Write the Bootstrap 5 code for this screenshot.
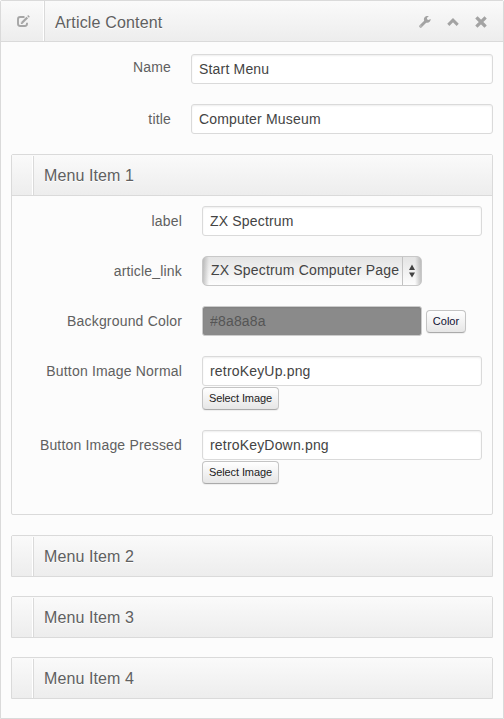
<!DOCTYPE html>
<html lang="en">
<head>
<meta charset="utf-8">
<title>Article Content</title>
<link href="https://cdn.jsdelivr.net/npm/bootstrap@5.3.0/dist/css/bootstrap.min.css" rel="stylesheet">
<style>
body{font-family:"Liberation Sans",Arial,sans-serif;font-size:14px;line-height:20px;color:#555;background:#fcfcfc}
.panel{height:719px;border:1px solid #dadada;border-radius:2px 2px 0 0;background:#fcfcfc}
.bar{height:41px;background:linear-gradient(#fafafa,#ededed);border-bottom:1px solid #dadada}
.bar h2{font-size:16px;line-height:20px;font-weight:400;color:#606060;text-shadow:0 1px 0 #fff;margin:3px 0 0 10px;letter-spacing:.17px}
.item .bar h2{margin-top:1px;letter-spacing:.1px}
.grip{height:39px;width:22px;border-right:1px solid #dadada;box-shadow:inset -1px 0 0 #fff}
.grip-main{width:44px;height:40px}
.tools{gap:16px;margin:2px 16px 0 0}
.outer-body{padding:12px 10px 0}
.field{margin-bottom:20px}
.field>label{text-align:right;padding-top:5px;flex:none;letter-spacing:.18px;color:#606060}
.outer-field>label{width:160px;margin-right:20px}
.first-label{margin-top:-2px}
.inner-field>label{width:161px;margin-right:20px}
.form-control.text{height:30px;font-size:14px;line-height:20px;padding:4px 7px;border:1px solid #dadada;border-radius:3px;color:#444;box-shadow:inset 0 1px 2px rgba(0,0,0,.07);letter-spacing:.18px;background:#fff}
.form-control.swatch{width:220px;background:#8a8a8a;color:#555;border-color:#ccc}
.picker{width:220px;height:30px;border:1px solid #c8c8c8;border-radius:5px;background:linear-gradient(to right,rgba(150,150,150,.55),rgba(200,200,200,0) 6px,rgba(200,200,200,0) calc(100% - 6px),rgba(150,150,150,.55)),linear-gradient(#e4e4e4,#fdfdfd);color:#444}
.picker span{width:200px;height:28px;flex:none;padding:3px 0 0 8px;border-right:1px solid #c2c2c2;white-space:nowrap;letter-spacing:.18px}
.picker svg{margin-left:5px}
.btn.tiny{height:23px;font-size:11px;line-height:13px;padding:4px 6px;border:1px solid #c4c4c4;border-bottom-color:#aaa;border-radius:4px;background:linear-gradient(#fff,#e6e6e6);color:#222;box-shadow:0 1px 1px rgba(0,0,0,.06)}
.btn.pick{width:77px;margin-top:1px;padding:4px 0;letter-spacing:-.1px}
.btn.color{width:40px;margin-left:4px;color:#113;padding:4px 0}
.item{border:1px solid #dadada;border-radius:2px 2px 0 0;margin-bottom:19px}
.item-open{height:361px;margin-bottom:20px;border-radius:2px}
.item-shut .bar{height:40px;border-bottom:0}
.item-body{padding:10px 10px 0 9px}
</style>
<script src="https://cdn.jsdelivr.net/npm/bootstrap@5.3.0/dist/js/bootstrap.bundle.min.js"></script>
</head>
<body>
<main class="panel">
  <header class="bar d-flex align-items-center">
    <div class="grip grip-main d-flex align-items-center justify-content-center">
      <svg width="14" height="13" viewBox="0 0 14 13" fill="none" stroke="#a6a6a6" stroke-width="1.900"><path d="M8.500 2H4.200Q2 2 2 4.200v4.600Q2 11 4.200 11h4.600Q11 11 11 8.800V7.800"/><path d="M6 7.800 11.300 2.500" stroke-width="2.300"/><path d="M12 1.900 13 .9" stroke-width="2.300"/><path d="M4.900 6.700v2.300h2.300z" fill="#a6a6a6" stroke="none"/></svg>
    </div>
    <h2>Article Content</h2>
    <div class="tools d-flex align-items-center ms-auto">
      <svg width="12" height="12" viewBox="0 0 12 12"><path d="M1.700 10.300 7.200 4.800" stroke="#a3a3a3" stroke-width="2.900" stroke-linecap="round"/><path d="M11.700 3.100A3.400 3.400 0 1 1 9.900.3L8 1.700v1.500l1.300.8z" fill="#a3a3a3"/><circle cx="1.900" cy="10.100" r=".5" fill="#eee"/></svg>
      <svg width="12" height="12" viewBox="0 0 12 12"><path d="M1.300 8.900 6 4.200l4.700 4.700" fill="none" stroke="#a3a3a3" stroke-width="3"/></svg>
      <svg width="12" height="12" viewBox="0 0 12 12"><path d="m2.500 2.500 7 7m0-7-7 7" stroke="#a3a3a3" stroke-width="3.200" stroke-linecap="square"/></svg>
    </div>
  </header>
  <div class="outer-body">
    <div class="field outer-field d-flex"><label class="first-label" for="name">Name</label><input id="name" class="form-control text" value="Start Menu"></div>
    <div class="field outer-field d-flex"><label for="title">title</label><input id="title" class="form-control text" value="Computer Museum"></div>
    <section class="item item-open">
      <div class="bar d-flex align-items-center"><div class="grip"></div><h2>Menu Item 1</h2></div>
      <div class="item-body">
        <div class="field inner-field d-flex"><label for="lab">label</label><input id="lab" class="form-control text" value="ZX Spectrum"></div>
        <div class="field inner-field d-flex"><label>article_link</label>
          <div class="picker d-flex align-items-center"><span>ZX Spectrum Computer Page</span><svg width="8" height="14" viewBox="0 0 8 14" fill="#444"><path d="M4 .5 7 6H1zM4 13.500 1 8.500h6z"/></svg></div>
        </div>
        <div class="field inner-field d-flex"><label for="bg">Background Color</label><input id="bg" class="form-control text swatch" value="#8a8a8a"><button class="btn tiny color align-self-center">Color</button></div>
        <div class="field inner-field d-flex"><label for="up">Button Image Normal</label><div class="flex-fill d-flex flex-column align-items-start"><input id="up" class="form-control text" value="retroKeyUp.png"><button class="btn tiny pick">Select Image</button></div></div>
        <div class="field inner-field d-flex"><label for="down">Button Image Pressed</label><div class="flex-fill d-flex flex-column align-items-start"><input id="down" class="form-control text" value="retroKeyDown.png"><button class="btn tiny pick">Select Image</button></div></div>
      </div>
    </section>
    <section class="item item-shut"><div class="bar d-flex align-items-center"><div class="grip"></div><h2>Menu Item 2</h2></div></section>
    <section class="item item-shut"><div class="bar d-flex align-items-center"><div class="grip"></div><h2>Menu Item 3</h2></div></section>
    <section class="item item-shut mb-0"><div class="bar d-flex align-items-center"><div class="grip"></div><h2>Menu Item 4</h2></div></section>
  </div>
</main>
</body>
</html>
